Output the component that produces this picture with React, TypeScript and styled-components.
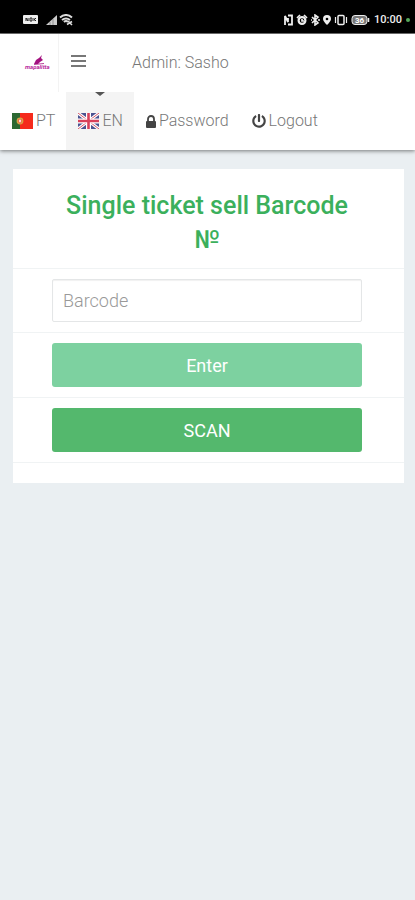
import React from "react";
import styled, { createGlobalStyle } from "styled-components";
import { FaPowerOff } from "react-icons/fa";

const GlobalStyle = createGlobalStyle`
  * { box-sizing: border-box; }
  body {
    margin: 0;
    background: #eaeff2;
    color: #777;
    font-family: Roboto, "Liberation Sans", sans-serif;
    font-size: 16px;
    font-weight: 300;
  }
`;

const StatusBar = styled.div`
  display: flex;
  justify-content: space-between;
  align-items: center;
  height: 34px;
  padding: 7px 5px 0 23px;
  background: #000;
  border-bottom: 1px solid #777;
  color: #eee;
`;

const StatusGroup = styled.div`
  display: flex;
  align-items: center;
  gap: 4px;
`;

const Clock = styled.span`
  font-size: 11px;
  font-weight: 500;
  line-height: 12px;
`;

const PrivacyDot = styled.span`
  width: 4px;
  height: 4px;
  border-radius: 50%;
  background: #55a95a;
`;

const Header = styled.header`
  background: #fff;
  box-shadow: 0 1px 4px rgba(0, 0, 0, 0.5);
`;

const TopRow = styled.div`
  display: flex;
  height: 58px;
`;

const Brand = styled.a`
  display: flex;
  align-items: center;
  width: 59px;
  padding-left: 24px;
  border-right: 1px solid #f3f3f3;
`;

const MenuButton = styled.button`
  display: flex;
  align-items: center;
  padding: 0 12px 4px;
  border: 0;
  background: none;
  color: #777;
`;

const UserName = styled.span`
  margin-left: 34px;
  line-height: 57px;
`;

const Nav = styled.nav`
  display: flex;
  height: 58px;
`;

const NavLink = styled.a<{ $active?: boolean }>`
  position: relative;
  display: flex;
  align-items: center;
  gap: 3px;
  padding: 0 11px 0 12px;
  background: ${(p) => (p.$active ? "#f4f4f4" : "transparent")};
  color: #777;
  line-height: 20px;
  text-decoration: none;

  svg { color: #444; }
`;

const ActiveMark = styled.span`
  position: absolute;
  top: 0;
  left: 50%;
  margin-left: -5px;
  border: 5px solid transparent;
  border-top: 4px solid #555;
  border-bottom: 0;
`;

const Card = styled.main`
  margin: 19px 11px 0 13px;
  padding-bottom: 20px;
  background: #fff;
`;

const Row = styled.div`
  padding: 10px 42px 10px 39px;
  border-bottom: 1px solid #f0f3f4;
`;

const Title = styled.h1`
  margin: 0;
  padding: 10px 12px 1px;
  color: #3bb05c;
  font-size: 25px;
  font-weight: 500;
  line-height: 34px;
  text-align: center;
`;

const BarcodeInput = styled.input`
  display: block;
  width: 100%;
  height: 43px;
  padding: 0 10px;
  border: 1px solid #e4e6e7;
  border-radius: 2px;
  background: #fff;
  color: #555;
  font: inherit;
  font-size: 18px;
  box-shadow: inset 0 1px 1px rgba(0, 0, 0, 0.06);

  &::placeholder { color: #999; opacity: 1; }
`;

const ActionButton = styled.button<{ $pale?: boolean }>`
  display: block;
  width: 100%;
  height: 44px;
  padding: 0;
  border: 0;
  border-radius: 3px;
  background: ${(p) => (p.$pale ? "#7dd1a0" : "#54b86d")};
  color: #fff;
  font: inherit;
  font-size: 18px;
  font-weight: 400;
`;

const Logo = () => (
  <svg width="29" height="20" viewBox="0 0 29 20" role="img" aria-label="Logo">
    <path d="M18 2 L17 5 L19 7 L16 9 L14 11 L10 11 L12 7 L15 5 Z" fill="#a3127f" />
    <path d="M10 11.5 L20 10.5" stroke="#a3127f" strokeWidth="0.8" />
    <text x="1" y="16" fontFamily="Roboto, sans-serif" fontSize="6" fontStyle="italic" fontWeight="700" fill="#b8289a">mapalitta</text>
  </svg>
);

const MenuIcon = () => (
  <svg width="15" height="14" viewBox="0 0 15 14" aria-hidden="true">
    <path d="M0 2h15M0 7h15M0 12h15" stroke="currentColor" strokeWidth="2" />
  </svg>
);

const LockIcon = () => (
  <svg width="10" height="13" viewBox="0 0 10 13" aria-hidden="true">
    <rect x="0" y="6" width="10" height="7" rx="1" fill="currentColor" />
    <path d="M2 6V4a3 3 0 0 1 6 0v2" stroke="currentColor" strokeWidth="1.8" fill="none" />
  </svg>
);

const FlagPT = () => (
  <svg width="21" height="16" viewBox="0 0 21 16" aria-hidden="true">
    <path d="M0 0h8v16H0z" fill="#2c6832" />
    <path d="M8 0h13v16H8z" fill="#f52a1c" />
    <circle cx="8" cy="8" r="3.4" fill="#d7a542" />
    <path d="M6 6h4v3l-2 2-2-2z" fill="#ec6d4c" />
    <path d="M7.2 6.8h1.6v2l-.8.8-.8-.8z" fill="#fff" />
  </svg>
);

const FlagGB = () => (
  <svg width="21" height="16" viewBox="0 0 21 16" aria-hidden="true">
    <path d="M0 0h21v16H0z" fill="#4b5290" />
    <path d="M0 0l21 16M21 0L0 16" stroke="#fff" strokeWidth="3" />
    <path d="M0 0l21 16M21 0L0 16" stroke="#d8596a" strokeWidth="1" />
    <path d="M10.5 0v16M0 8h21" stroke="#fff" strokeWidth="5" />
    <path d="M10.5 0v16M0 8h21" stroke="#d9405a" strokeWidth="2.6" />
  </svg>
);

const PhoneStatusLeft = () => (
  <svg width="51" height="12" viewBox="0 0 51 12" aria-hidden="true">
    <rect x="0" y="1" width="15" height="9" rx="1" fill="#eee" />
    <path d="M3 7V4l2 3V4M7 4v3M7 4h2v3H7M11 4v3M11 6l2-2M11 5l2 2" stroke="#222" fill="none" />
    <path d="M23 11L34 1v10z" fill="#ccc" />
    <path d="M27 8v3M30 5v6" stroke="#777" strokeWidth="0.7" />
    <path d="M37 3.5q6-5 12 0M39 6q4-3 8 0M41 8q2-2 4 0" stroke="#ddd" strokeWidth="2" fill="none" />
    <path d="M44 10.5l5-3M45 7l4 4" stroke="#ddd" strokeWidth="1.6" />
  </svg>
);

const PhoneStatusRight = () => (
  <svg width="86" height="12" viewBox="0 0 86 12" fill="none" stroke="#eee" aria-hidden="true">
    <path d="M1 11V2l3 6V4M4 1.5h4v9H4" strokeWidth="1.8" />
    <circle cx="18" cy="6.5" r="3.4" strokeWidth="2.2" />
    <path d="M13 4l3-3M23 4l-3-3M18 5v2h2" strokeWidth="1.7" />
    <path d="M28 3l6 6-3 2V1l3 2-6 6M27 6h1M34 6h2" strokeWidth="1.6" />
    <path d="M43 1a4 4 0 0 1 4 4q0 2-4 6-4-4-4-6a4 4 0 0 1 4-4z" fill="#eee" stroke="none" />
    <circle cx="43" cy="5" r="1.3" fill="#000" stroke="none" />
    <rect x="54" y="1.5" width="6" height="9" rx="1" strokeWidth="1.5" />
    <path d="M51.5 3v6M62.5 3v6" strokeWidth="1.2" />
    <rect x="68" y="1.5" width="15" height="9" rx="3" fill="#777" />
    <path d="M84.5 4v4" strokeWidth="1.5" />
    <text x="71" y="9" fontFamily="Roboto, sans-serif" fontSize="8" fontWeight="700" fill="#fff" stroke="none">36</text>
  </svg>
);

export default function App() {
  return (
    <>
      <GlobalStyle />
      <StatusBar>
        <PhoneStatusLeft />
        <StatusGroup>
          <PhoneStatusRight />
          <Clock>10:00</Clock>
          <PrivacyDot />
        </StatusGroup>
      </StatusBar>
      <Header>
        <TopRow>
          <Brand href="#" aria-label="Home">
            <Logo />
          </Brand>
          <MenuButton type="button" aria-label="Toggle menu">
            <MenuIcon />
          </MenuButton>
          <UserName>Admin: Sasho</UserName>
        </TopRow>
        <Nav>
          <NavLink href="#pt">
            <FlagPT />
            PT
          </NavLink>
          <NavLink href="#en" $active aria-current="true">
            <ActiveMark />
            <FlagGB />
            EN
          </NavLink>
          <NavLink href="#password">
            <LockIcon />
            Password
          </NavLink>
          <NavLink href="#logout">
            <FaPowerOff size={14} />
            Logout
          </NavLink>
        </Nav>
      </Header>
      <Card>
        <Row>
          <Title>Single ticket sell Barcode №</Title>
        </Row>
        <Row>
          <BarcodeInput type="text" placeholder="Barcode" aria-label="Barcode" />
        </Row>
        <Row>
          <ActionButton type="button" $pale>Enter</ActionButton>
        </Row>
        <Row>
          <ActionButton type="button">SCAN</ActionButton>
        </Row>
      </Card>
    </>
  );
}
